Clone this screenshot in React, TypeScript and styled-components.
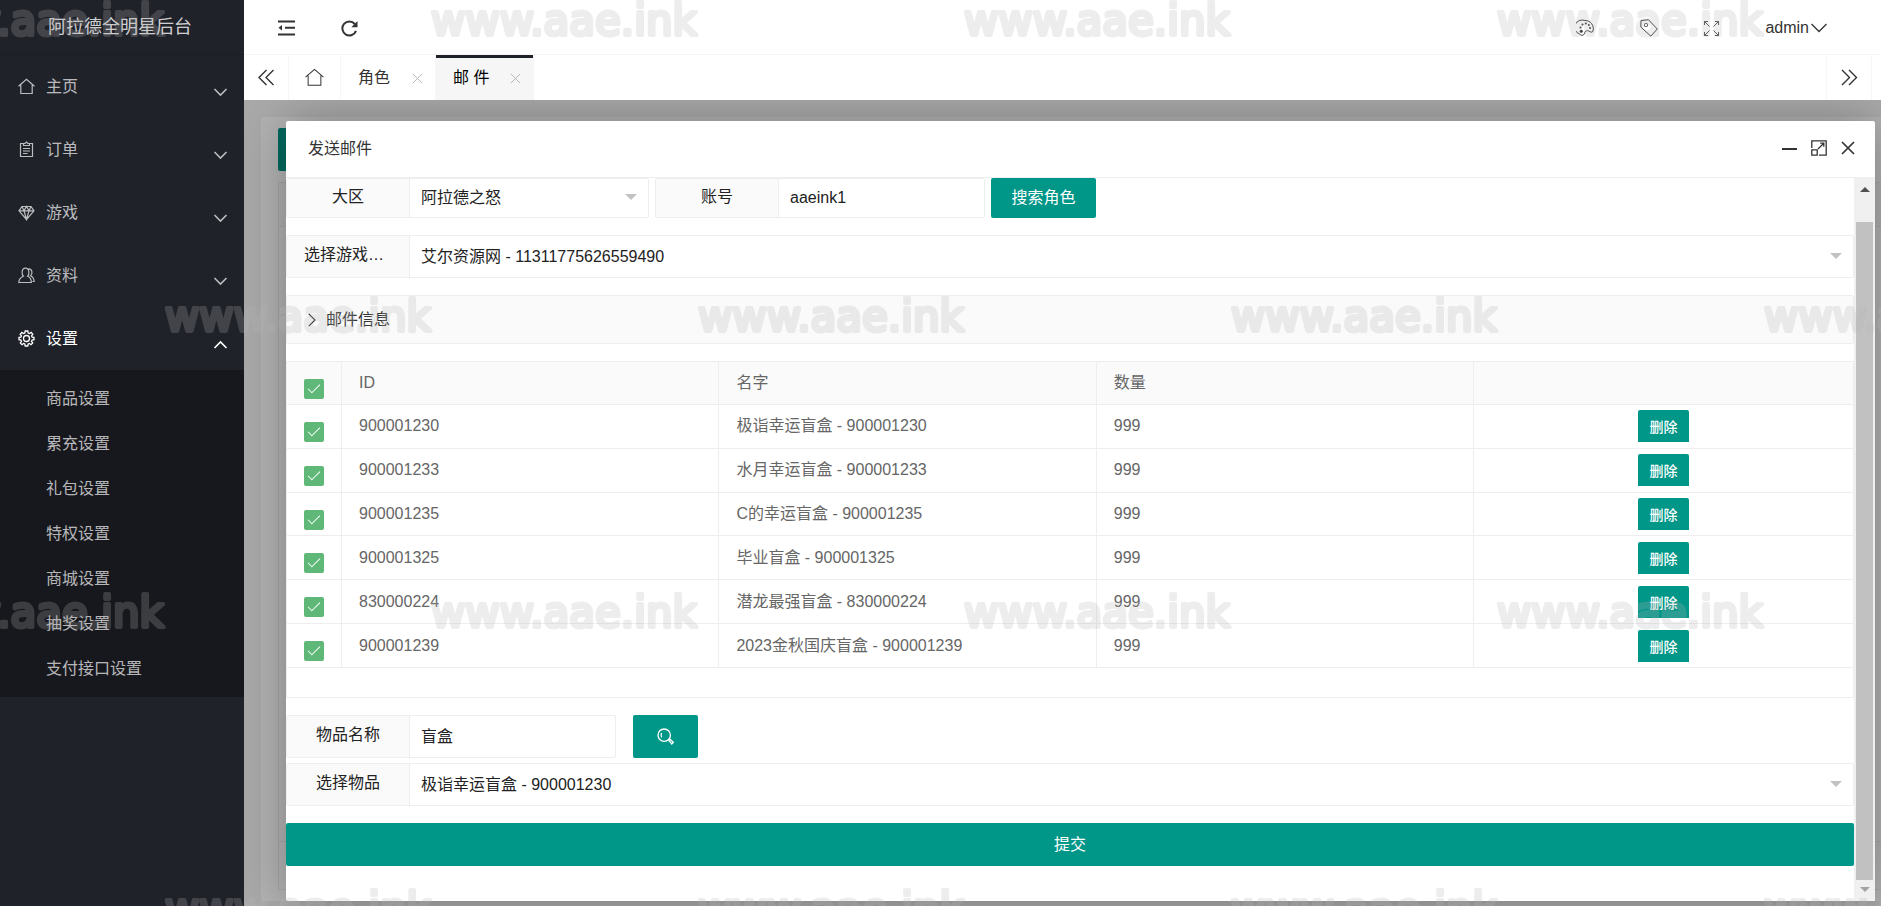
import React from "react";
import styled, { createGlobalStyle, css } from "styled-components";

const teal = "#009688";
const line = "#eeeeee";
const sans = `"Liberation Sans", "Noto Sans CJK SC", sans-serif`;

const GlobalStyle = createGlobalStyle`
  *, *::before, *::after { box-sizing: border-box; }
  body { margin: 0; overflow: hidden; background: #f2f2f2; color: #333; font: 16px/24px ${sans}; }
  button, input, select { font: inherit; color: inherit; margin: 0; }
  button { border: 0; padding: 0; background: none; cursor: pointer; }
  a { color: inherit; text-decoration: none; }
  ul { list-style: none; margin: 0; padding: 0; }
`;

const Shell = styled.div`
  display: flex;
  height: 100vh;
`;

/* Sidebar */

const Sidebar = styled.aside`
  flex: 0 0 244px;
  background: #20222a;
  color: rgba(255, 255, 255, 0.7);
`;

const Logo = styled.div`
  height: 55px;
  padding-right: 4px;
  border-bottom: 1px solid #1c1e25;
  color: rgba(255, 255, 255, 0.8);
  font-size: 18px;
  line-height: 54px;
  text-align: center;
`;

const NavLink = styled.a<{ $active?: boolean }>`
  display: flex;
  align-items: center;
  gap: 11px;
  height: 63px;
  padding: 0 16px 0 18px;
  ${(p) => p.$active && css`color: #fff;`}
`;

const NavLabel = styled.span`
  flex: 1;
`;

const NavArrow = styled.span`
  display: flex;
  padding-top: 12px;
`;

const SubMenu = styled.ul`
  padding: 6px 0;
  background: #17181d;
`;

const SubLink = styled.a`
  display: block;
  padding-left: 46px;
  line-height: 45px;
`;

/* Top area */

const Main = styled.main`
  flex: 1;
  min-width: 0;
  display: flex;
  flex-direction: column;
`;

const TopBar = styled.header`
  display: flex;
  justify-content: space-between;
  height: 55px;
  padding: 0 54px 0 34px;
  background: #fff;
  border-bottom: 1px solid #f6f6f6;
`;

const ToolGroup = styled.div<{ $gap: number }>`
  display: flex;
  align-items: center;
  gap: ${(p) => p.$gap}px;
  padding-top: 2px;
`;

const IconButton = styled.button`
  display: flex;
  align-items: center;
  justify-content: center;
`;

const UserButton = styled(IconButton)`
  gap: 2px;
`;

const TabBar = styled.nav`
  display: flex;
  height: 45px;
  padding-right: 9px;
  background: #fff;
  position: relative;
  box-shadow: 0 1px 2px rgba(0, 0, 0, 0.1);
`;

const TabControl = styled.button<{ $width: number; $end?: boolean }>`
  display: flex;
  align-items: center;
  justify-content: center;
  width: ${(p) => p.$width}px;
  border-right: 1px solid #f6f6f6;
  ${(p) => p.$end && css`margin-left: auto; border-left: 1px solid #f6f6f6;`}
`;

const Tab = styled.div<{ $active?: boolean }>`
  display: flex;
  align-items: center;
  justify-content: space-between;
  width: ${(p) => (p.$active ? 98 : 95)}px;
  padding: 0 12px 0 17px;
  border-right: 1px solid #f6f6f6;
  ${(p) =>
    p.$active &&
    css`
      color: #000;
      background: #f6f6f6;
      box-shadow: inset 0 3px 0 #20222a;
    `}
`;

const TabClose = styled(IconButton)`
  padding-top: 2px;
`;

/* Dimmed page under the dialog */

const Stage = styled.section`
  flex: 1;
  min-height: 0;
  position: relative;
  overflow: hidden;
  padding: 17px 0 5px 17px;
  background: #a9a9a9;
`;

const PageCard = styled.div`
  height: 100%;
  padding: 11px 0 11px 17px;
  border-radius: 2px 0 0 2px;
  background: #b2b2b2;
`;

const PageButton = styled.button`
  display: block;
  width: 80px;
  height: 43px;
  border-radius: 2px;
  background: #00695f;
`;

const PageTable = styled.div`
  display: flex;
  flex-direction: column;
  justify-content: space-between;
  height: calc(100% - 54px);
  margin-top: 11px;
  border: 1px solid #a6a6a6;
  border-right: 0;
`;

const PageTableHead = styled.div`
  height: 44px;
  background: #afafaf;
  border-bottom: 1px solid #a6a6a6;
`;

const PageTableFoot = styled.div`
  height: 48px;
  border-top: 1px solid #a6a6a6;
`;

/* Dialog */

const Dialog = styled.section`
  position: absolute;
  inset: 21px 6px 5px 42px;
  display: flex;
  flex-direction: column;
  border-radius: 2px;
  background: #fff;
  box-shadow: 1px 1px 50px rgba(0, 0, 0, 0.3);
`;

const DialogHead = styled.header`
  display: flex;
  align-items: center;
  justify-content: space-between;
  height: 57px;
  flex: none;
  padding: 0 20px 2px 22px;
  border-bottom: 1px solid ${line};
  border-radius: 2px 2px 0 0;
`;

const DialogTitle = styled.h1`
  margin: 0;
  padding-top: 2px;
  font-size: 16px;
  font-weight: 400;
`;

const WindowButtons = styled.div`
  display: flex;
  align-items: center;
  gap: 14px;
`;

const DialogBody = styled.div`
  flex: 1;
  min-height: 0;
  display: flex;
`;

const Form = styled.form`
  flex: 1;
  min-width: 0;
  overflow: hidden;
  display: flex;
  flex-direction: column;
`;

const Row = styled.div<{ $clipped?: boolean; $tight?: boolean }>`
  display: flex;
  gap: 6px;
  flex: none;
  height: ${(p) => (p.$clipped ? 40 : 43)}px;
  margin-bottom: ${(p) => (p.$tight ? 5 : 17)}px;
  ${(p) => p.$clipped && css`& > * { border-top: 0; border-top-left-radius: 0; border-top-right-radius: 0; }`}
`;

const Field = styled.div<{ $width?: number }>`
  ${(p) => (p.$width ? css`flex: 0 0 ${p.$width}px;` : css`flex: 1;`)}
  min-width: 0;
  display: flex;
  position: relative;
  border: 1px solid ${line};
  border-radius: 2px;
  color: #222;
`;

const FieldLabel = styled.label<{ $long?: boolean }>`
  flex: 0 0 123px;
  display: flex;
  align-items: center;
  justify-content: ${(p) => (p.$long ? "flex-start" : "center")};
  padding: 0 17px 3px;
  background: #fafafa;
  border-right: 1px solid ${line};
`;

const TextInput = styled.input`
  flex: 1;
  min-width: 0;
  padding: 0 11px;
  border: 0;
  outline: 0;
  background: transparent;
`;

const Select = styled.select`
  appearance: none;
  flex: 1;
  min-width: 0;
  padding: 0 30px 0 11px;
  border: 0;
  outline: 0;
  background: transparent;
`;

const SelectArrow = styled.span`
  position: absolute;
  top: 50%;
  right: 11px;
  margin-top: -4px;
  border: 6px solid transparent;
  border-top-color: #c2c2c2;
  border-bottom: 0;
  pointer-events: none;
`;

const PrimaryButton = styled.button<{ $width?: number; $spaced?: boolean }>`
  display: flex;
  align-items: center;
  justify-content: center;
  ${(p) => p.$width && css`width: ${p.$width}px;`}
  ${(p) => p.$spaced && css`margin-left: 11px;`}
  border-radius: 2px;
  background: ${teal};
  color: #fff;
`;

const SubmitButton = styled(PrimaryButton)`
  flex: none;
  height: 43px;
`;

const Collapse = styled.button`
  flex: none;
  display: flex;
  align-items: center;
  gap: 10px;
  height: 49px;
  margin-bottom: 17px;
  padding: 0 21px;
  border: 1px solid ${line};
  border-radius: 2px;
  background: #fafafa;
`;

const TableBox = styled.div`
  flex: none;
  height: 337px;
  margin-bottom: 17px;
  border: 1px solid ${line};
  color: #666;
`;

const DataTable = styled.table`
  width: 100%;
  height: 306px;
  table-layout: fixed;
  border-collapse: separate;
  border-spacing: 0;
`;

const Tr = styled.tr`
  height: 43px;
`;

const cell = css`
  padding: 0 17px;
  border-right: 1px solid ${line};
  border-bottom: 1px solid ${line};
  font-weight: 400;
  text-align: left;
  vertical-align: middle;
  &:last-child { border-right: 0; text-align: center; }
`;

const Th = styled.th<{ $width?: string }>`
  ${cell}
  ${(p) => p.$width && css`width: ${p.$width};`}
  background: #fafafa;
`;

const Td = styled.td`
  ${cell}
`;

const CheckBox = styled.input`
  appearance: none;
  display: block;
  position: relative;
  width: 20px;
  height: 20px;
  margin-top: 11px;
  border-radius: 2px;
  background: #d2d2d2;
  &:checked { background: #5fb878; }
  &:checked::after {
    content: "";
    position: absolute;
    left: 4px;
    top: 5px;
    width: 12px;
    height: 6px;
    border: solid #fff;
    border-width: 0 0 1px 1px;
    transform: rotate(-45deg);
  }
`;

const DeleteButton = styled.button`
  display: block;
  width: 51px;
  height: 32px;
  margin: 0 auto;
  border-radius: 2px 2px 0 0;
  background: ${teal};
  color: #fff;
  font-size: 14px;
  font-weight: 500;
  line-height: 34px;
`;

const ScrollTrack = styled.div`
  flex: 0 0 21px;
  display: flex;
  flex-direction: column;
  align-items: center;
  padding: 9px 2px;
  background: #f0f0f0;
`;

const ScrollThumb = styled.div`
  flex: 1;
  width: 100%;
  margin: 30px 0 7px;
  background: #c1c1c1;
`;

const ScrollArrow = styled.span<{ $down?: boolean }>`
  border: 5px solid transparent;
  ${(p) =>
    p.$down
      ? css`border-top-color: #a3a3a3; border-bottom: 0;`
      : css`border-bottom-color: #505050; border-top: 0;`}
`;

/* Site mark repeated over the whole window */

const MarkLayer = styled.svg`
  position: fixed;
  inset: 0;
  width: 100%;
  height: 100%;
  pointer-events: none;
  opacity: 0.24;
  font: 400 42px "DejaVu Sans", sans-serif;
  fill: #b4b4b4;
  stroke: #b4b4b4;
  stroke-width: 4px;
  stroke-linejoin: round;
`;

/* Icons */

type SvgProps = { size?: number; width?: number; box?: string; stroke?: number; children: React.ReactNode };

const Svg = ({ size = 17, width, box = "0 0 17 17", stroke = 1, children }: SvgProps) => (
  <svg
    width={width ?? size}
    height={size}
    viewBox={box}
    fill="none"
    stroke="currentColor"
    strokeWidth={stroke}
    aria-hidden="true"
  >
    {children}
  </svg>
);

const HomeIcon = ({ size = 17, stroke = 1.2 }: { size?: number; stroke?: number }) => (
  <Svg size={size} stroke={stroke}>
    <path d="M0.5 8.2 8.5 1.3 16.5 8.2M2.8 6.8V15.5H14.2V6.8" />
  </Svg>
);

const OrderIcon = () => (
  <Svg stroke={1.2}>
    <path d="M5 2.5H2.5V15.5H14.5V2.5H12M5.5 4.5V2.5H7L8.5 1L10 2.5H11.5V4.5ZM5 7.5H12M5 10H12M5 12.5H9.5" />
  </Svg>
);

const GemIcon = () => (
  <Svg stroke={1.2}>
    <path d="M4 2.5H13L16 6.8 8.5 15.5 1 6.8ZM1 6.8H16M4 2.5 6 6.8 8.5 15.5 11 6.8 13 2.5M6 6.8 8.5 2.5 11 6.8" />
  </Svg>
);

const UsersIcon = () => (
  <Svg stroke={1.2}>
    <path d="M5.4 9.3C3.5 7.5 3.3 1.2 7.5 1.2S11.5 7.5 9.6 9.3C12.5 10.5 13.3 12.5 13.4 15.5H.8C.9 12.5 2.5 10.5 5.4 9.3ZM10.3 1.8C14.5 1.5 14.8 6.8 12.6 8.8 15 10 16 12 16.2 14.5H14.5" />
  </Svg>
);

const GearIcon = () => (
  <Svg stroke={1.3}>
    <circle cx="8.5" cy="8.5" r="3" />
    <path d="M7.2 1H9.8L10.2 3 11.5 3.5 13.2 2.4 14.8 4.2 13.6 5.8 14.1 7.1 16 7.4V9.7L14.1 10 13.5 11.3 14.7 12.9 13 14.7 11.4 13.5 10.2 14 9.8 16H7.2L6.8 14 5.6 13.5 4 14.7 2.3 12.9 3.5 11.3 2.9 10 1 9.7V7.4L2.9 7.1 3.4 5.8 2.2 4.2 3.9 2.4 5.5 3.5 6.8 3Z" />
  </Svg>
);

const ArrowDown = () => (
  <Svg width={15} size={9} box="0 0 15 9" stroke={1.6}>
    <path d="M1.5 1 7.5 7 13.5 1" />
  </Svg>
);

const ArrowUp = () => (
  <Svg width={15} size={9} box="0 0 15 9" stroke={1.6}>
    <path d="M1.5 8 7.5 2 13.5 8" />
  </Svg>
);

const ShrinkIcon = () => (
  <Svg stroke={2}>
    <path d="M0 1.5H17M7 7.7H17M0 14.5H17" />
    <path d="M0.5 7.7 4 5V10.4Z" fill="currentColor" stroke="none" />
  </Svg>
);

const RefreshIcon = () => (
  <Svg stroke={2}>
    <path d="M13.8 4A7 7 0 1 0 15 10.8" />
    <path d="M16.5 1V7.2H10.3Z" fill="currentColor" stroke="none" />
  </Svg>
);

const PaletteIcon = () => (
  <Svg size={18} box="0 0 18 17">
    <path d="M9 1A7.6 7.2 0 0 0 3.5 14.5C6 17 8.5 15.5 8.8 13 9.2 11 11.5 10.8 12.8 11.5 14 12.5 16.5 13.5 17 11.5 18.5 6 14.5 1 9 1Z" />
    <circle cx="5.2" cy="11.8" r="1.5" fill="currentColor" stroke="none" />
    <g fill="currentColor" stroke="none">
      <circle cx="4.5" cy="8" r="1" />
      <circle cx="6.5" cy="5" r="1" />
      <circle cx="9.8" cy="4" r="1" />
      <circle cx="12.8" cy="5.5" r="1" />
      <circle cx="14" cy="8.5" r="1" />
    </g>
  </Svg>
);

const TagIcon = () => (
  <Svg size={18} box="0 0 18 18">
    <path d="M1 1.5 8.5 0.8 17.3 10 10.8 17.2 0.8 8Z" strokeLinejoin="round" />
    <rect x="4.5" y="4.5" width="3" height="3" rx="1" />
  </Svg>
);

const FullscreenIcon = () => (
  <Svg size={15} box="0 0 15 15" stroke={0.9}>
    <path d="M.5 4V.5H4M11 .5H14.5V4M14.5 11V14.5H11M4 14.5H.5V11" />
    <path d="M.5.5 5.5 5.5M14.5.5 9.5 5.5M14.5 14.5 9.5 9.5M.5 14.5 5.5 9.5" />
  </Svg>
);

const UserArrow = () => (
  <Svg width={16} size={10} box="0 0 16 10" stroke={1.3}>
    <path d="M.5 1 8 8.5 15.5 1" />
  </Svg>
);

const DoubleLeft = () => (
  <Svg stroke={1.4}>
    <path d="M8.5 1 1 8.5 8.5 16M15.5 1 8 8.5 15.5 16" />
  </Svg>
);

const DoubleRight = () => (
  <Svg stroke={1.4}>
    <path d="M1 1 8.5 8.5 1 16M8 1 15.5 8.5 8 16" />
  </Svg>
);

const CloseSmall = () => (
  <Svg size={11} box="0 0 11 11">
    <path d="M.8.8 10.2 10.2M10.2.8.8 10.2" stroke="#b8b8b8" />
  </Svg>
);

const MinimizeIcon = () => (
  <Svg width={15} size={17} box="0 0 15 17" stroke={2}>
    <path d="M0 9H15" />
  </Svg>
);

const MaximizeIcon = () => (
  <Svg size={16} box="0 0 16 16" stroke={1.3}>
    <path d="M.8 8V.8H15.2V15.2H8M.8 9.8H6.2V15.2H.8ZM7 9 12.5 3.5M9.2 3.2H12.8V6.8" />
  </Svg>
);

const CloseIcon = () => (
  <Svg size={14} box="0 0 14 14" stroke={1.7}>
    <path d="M1 1 13 13M13 1 1 13" />
  </Svg>
);

const ChevronRight = () => (
  <Svg width={8} size={14} box="0 0 8 14" stroke={1.2}>
    <path d="M.8.8 7 7 .8 13.2" />
  </Svg>
);

const SearchIcon = () => (
  <Svg stroke={1.3}>
    <circle cx="7.2" cy="7.2" r="6.2" />
    <path d="M4.5 5C3.8 6.5 3.9 8 4.7 9.3" />
    <path d="M11.5 12 12.6 10.9 16.3 14.3 14.8 15.9Z" />
  </Svg>
);

/* Data */

const navItems = [
  { label: "主页", icon: <HomeIcon /> },
  { label: "订单", icon: <OrderIcon /> },
  { label: "游戏", icon: <GemIcon /> },
  { label: "资料", icon: <UsersIcon /> },
];

const settings = ["商品设置", "累充设置", "礼包设置", "特权设置", "商城设置", "抽奖设置", "支付接口设置"];

const mailItems = [
  { id: "900001230", name: "极诣幸运盲盒 - 900001230" },
  { id: "900001233", name: "水月幸运盲盒 - 900001233" },
  { id: "900001235", name: "C的幸运盲盒 - 900001235" },
  { id: "900001325", name: "毕业盲盒 - 900001325" },
  { id: "830000224", name: "潜龙最强盲盒 - 830000224" },
  { id: "900001239", name: "2023金秋国庆盲盒 - 900001239" },
];

const marks = [0, 1, 2, 3].flatMap((row) =>
  [0, 1, 2, 3].map((col) => ({
    x: (row % 2 ? 165 : -102) + col * 533,
    y: 35 + row * 296,
  }))
);

export default function App() {
  return (
    <>
      <GlobalStyle />
      <Shell>
        <Sidebar>
          <Logo>阿拉德全明星后台</Logo>
          <ul>
            {navItems.map((item) => (
              <li key={item.label}>
                <NavLink href="#">
                  {item.icon}
                  <NavLabel>{item.label}</NavLabel>
                  <NavArrow><ArrowDown /></NavArrow>
                </NavLink>
              </li>
            ))}
            <li>
              <NavLink href="#" $active>
                <GearIcon />
                <NavLabel>设置</NavLabel>
                <NavArrow><ArrowUp /></NavArrow>
              </NavLink>
              <SubMenu>
                {settings.map((label) => (
                  <li key={label}><SubLink href="#">{label}</SubLink></li>
                ))}
              </SubMenu>
            </li>
          </ul>
        </Sidebar>

        <Main>
          <TopBar>
            <ToolGroup $gap={46}>
              <IconButton aria-label="侧边伸缩"><ShrinkIcon /></IconButton>
              <IconButton aria-label="刷新"><RefreshIcon /></IconButton>
            </ToolGroup>
            <ToolGroup $gap={46}>
              <IconButton aria-label="主题"><PaletteIcon /></IconButton>
              <IconButton aria-label="便签"><TagIcon /></IconButton>
              <IconButton aria-label="全屏"><FullscreenIcon /></IconButton>
              <UserButton>admin<UserArrow /></UserButton>
            </ToolGroup>
          </TopBar>

          <TabBar>
            <TabControl $width={45} aria-label="向左"><DoubleLeft /></TabControl>
            <TabControl $width={52} aria-label="首页"><HomeIcon size={19} stroke={0.9} /></TabControl>
            <Tab>
              <a href="#">角色</a>
              <TabClose aria-label="关闭角色"><CloseSmall /></TabClose>
            </Tab>
            <Tab $active>
              <a href="#">邮 件</a>
              <TabClose aria-label="关闭邮件"><CloseSmall /></TabClose>
            </Tab>
            <TabControl $width={46} $end aria-label="向右"><DoubleRight /></TabControl>
          </TabBar>

          <Stage>
            <PageCard aria-hidden="true">
              <PageButton tabIndex={-1} />
              <PageTable>
                <PageTableHead />
                <PageTableFoot />
              </PageTable>
            </PageCard>

            <Dialog role="dialog" aria-labelledby="dialog-title">
              <DialogHead>
                <DialogTitle id="dialog-title">发送邮件</DialogTitle>
                <WindowButtons>
                  <IconButton aria-label="最小化"><MinimizeIcon /></IconButton>
                  <IconButton aria-label="最大化"><MaximizeIcon /></IconButton>
                  <IconButton aria-label="关闭"><CloseIcon /></IconButton>
                </WindowButtons>
              </DialogHead>

              <DialogBody>
                <Form onSubmit={(e) => e.preventDefault()}>
                  <Row $clipped>
                    <Field $width={363}>
                      <FieldLabel htmlFor="zone">大区</FieldLabel>
                      <Select id="zone"><option>阿拉德之怒</option></Select>
                      <SelectArrow />
                    </Field>
                    <Field $width={330}>
                      <FieldLabel htmlFor="account">账号</FieldLabel>
                      <TextInput id="account" defaultValue="aaeink1" />
                    </Field>
                    <PrimaryButton type="button" $width={105}>搜索角色</PrimaryButton>
                  </Row>

                  <Row>
                    <Field>
                      <FieldLabel htmlFor="role" $long>选择游戏…</FieldLabel>
                      <Select id="role"><option>艾尔资源网 - 11311775626559490</option></Select>
                      <SelectArrow />
                    </Field>
                  </Row>

                  <Collapse type="button">
                    <ChevronRight />
                    邮件信息
                  </Collapse>

                  <TableBox>
                    <DataTable>
                      <thead>
                        <Tr>
                          <Th $width="55px"><CheckBox type="checkbox" defaultChecked aria-label="全选" /></Th>
                          <Th $width="24.1%">ID</Th>
                          <Th $width="24.1%">名字</Th>
                          <Th $width="24.1%">数量</Th>
                          <Th />
                        </Tr>
                      </thead>
                      <tbody>
                        {mailItems.map((item) => (
                          <Tr key={item.id}>
                            <Td><CheckBox type="checkbox" defaultChecked aria-label={item.name} /></Td>
                            <Td>{item.id}</Td>
                            <Td>{item.name}</Td>
                            <Td>999</Td>
                            <Td><DeleteButton type="button">删除</DeleteButton></Td>
                          </Tr>
                        ))}
                      </tbody>
                    </DataTable>
                  </TableBox>

                  <Row $tight>
                    <Field $width={330}>
                      <FieldLabel htmlFor="keyword">物品名称</FieldLabel>
                      <TextInput id="keyword" defaultValue="盲盒" />
                    </Field>
                    <PrimaryButton type="button" $width={65} $spaced aria-label="搜索物品">
                      <SearchIcon />
                    </PrimaryButton>
                  </Row>

                  <Row>
                    <Field>
                      <FieldLabel htmlFor="item">选择物品</FieldLabel>
                      <Select id="item"><option>极诣幸运盲盒 - 900001230</option></Select>
                      <SelectArrow />
                    </Field>
                  </Row>

                  <SubmitButton type="submit">提交</SubmitButton>
                </Form>

                <ScrollTrack aria-hidden="true">
                  <ScrollArrow />
                  <ScrollThumb />
                  <ScrollArrow $down />
                </ScrollTrack>
              </DialogBody>
            </Dialog>
          </Stage>
        </Main>
      </Shell>

      <MarkLayer aria-hidden="true">
        {marks.map((m) => (
          <text key={`${m.x}-${m.y}`} x={m.x} y={m.y}>www.aae.ink</text>
        ))}
      </MarkLayer>
    </>
  );
}
